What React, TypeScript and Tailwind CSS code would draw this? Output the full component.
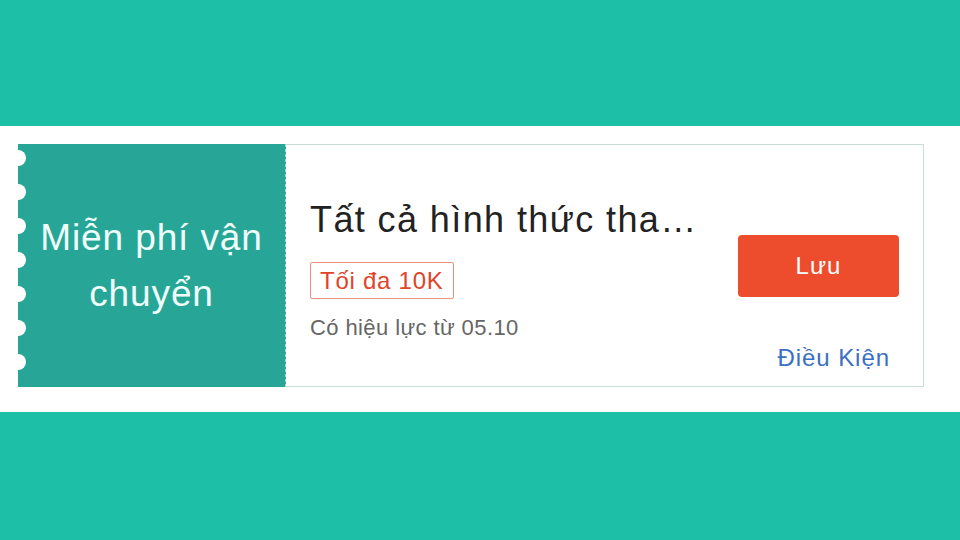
const notches = [158, 192, 226, 260, 294, 328, 362];

export default function App() {
  return (
    <div className="flex h-[540px] w-[960px] flex-col bg-[#1dbfa7] font-['Liberation_Sans',Arial,sans-serif]">
      <div className="h-[126px]" />
      <div className="flex h-[286px] items-start bg-white pl-[18px] pt-[18px]">
        <div className="relative flex h-[243px] w-[906px]">
          {/* stub */}
          <div className="flex w-[268px] shrink-0 items-center justify-center border-r border-dashed border-[#9fdcd4] bg-[#27a697] text-center text-[37px] leading-[56px] tracking-[0.9px] text-[#effffb]">
            <div>
              Miễn phí vận
              <br />
              chuyển
            </div>
          </div>
          {notches.map((y) => (
            <span
              key={y}
              className="absolute left-[-8px] h-[16px] w-[16px] rounded-full bg-white"
              style={{ top: y - 144 - 8 }}
            />
          ))}
          {/* body */}
          <div className="flex flex-1 border-y border-r border-[#c9dcd8] bg-white">
            <div className="flex flex-1 flex-col pl-[24px] pt-[55px]">
              <div className="text-[36px] leading-[40px] tracking-[1.4px] text-[#222]">Tất cả hình thức tha…</div>
              <div className="mt-[22px] flex h-[37px] w-fit items-center rounded-[2px] border border-[#e9907f] px-[9px] text-[24px] leading-[28px] tracking-[0.75px] text-[#e0442a]">
                Tối đa 10K
              </div>
              <div className="mt-[16px] text-[22px] leading-[26px] tracking-[0.4px] text-[#666]">Có hiệu lực từ 05.10</div>
            </div>
            <div className="flex w-[186px] flex-col items-end pr-[24px] pt-[90px]">
              <button className="flex h-[62px] w-[161px] items-center justify-center rounded-[4px] bg-[#ee4d2d] text-[24px] leading-[28px] tracking-[1.1px] text-white">
                Lưu
              </button>
              <div className="mt-[47px] pr-[9px] text-[24px] leading-[28px] tracking-[0.95px] text-[#3b6fc4]">Điều Kiện</div>
            </div>
          </div>
        </div>
      </div>
      <div className="flex-1" />
    </div>
  );
}
